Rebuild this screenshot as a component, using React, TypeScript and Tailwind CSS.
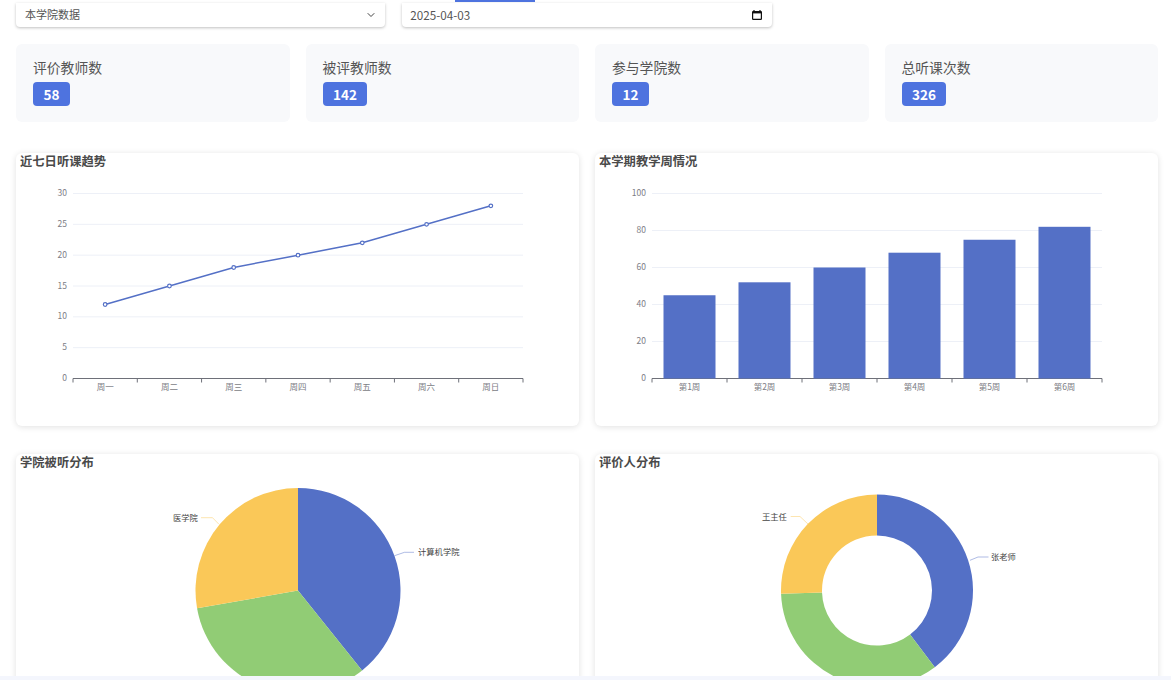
import { ReactNode } from "react";
import { ChevronDown } from "lucide-react";

const stats = [
  { label: "评价教师数", value: 58 },
  { label: "被评教师数", value: 142 },
  { label: "参与学院数", value: 12 },
  { label: "总听课次数", value: 326 },
];

const BLUE = "#5470c6";
const GREEN = "#91cc75";
const YELLOW = "#fac858";
const AXIS = "#6e7079";

// chart coordinates below are page pixels, each svg viewBox is offset to match
const TOP = 193.5;
const ZERO = 378.5;

function ChartCard({ title, x, y, children }: { title: string; x: number; y: number; children: ReactNode }) {
  return (
    <div className="h-[273px] overflow-hidden rounded-md bg-white shadow-[0_1px_6px_rgba(0,0,0,0.12)]">
      <h3 className="h-[18px] px-1 text-[12.3px] font-bold leading-[16px] text-[#4a4a4a]">{title}</h3>
      <svg viewBox={`${x} ${y} 563 255`} className="block h-[255px] w-full">
        {children}
      </svg>
    </div>
  );
}

function Axes({ left, right, max, step, labels }: { left: number; right: number; max: number; step: number; labels: string[] }) {
  const ticks: number[] = [];
  for (let v = 0; v <= max; v += step) ticks.push(v);
  const band = (right - left) / labels.length;
  return (
    <g fontSize="8.5" fill="#7c7d85">
      {ticks.map((v) => {
        const y = ZERO - (v / max) * (ZERO - TOP);
        return (
          <g key={v}>
            {v > 0 && <line x1={left} x2={right} y1={y} y2={y} stroke="#edf0f7" />}
            <text x={left - 6} y={y + 2.6} textAnchor="end">{v}</text>
          </g>
        );
      })}
      <line x1={left} x2={right} y1={ZERO} y2={ZERO} stroke={AXIS} />
      {labels.map((l, i) => (
        <g key={l}>
          <line x1={left + band * i} x2={left + band * i} y1={ZERO} y2={ZERO + 4} stroke={AXIS} />
          <text x={left + band * (i + 0.5)} y={ZERO + 11.5} textAnchor="middle">{l}</text>
        </g>
      ))}
      <line x1={right} x2={right} y1={ZERO} y2={ZERO + 4} stroke={AXIS} />
    </g>
  );
}

function LineChart() {
  const data = [12, 15, 18, 20, 22, 25, 28];
  const days = ["周一", "周二", "周三", "周四", "周五", "周六", "周日"];
  const band = 450 / 7;
  const pts = data.map((v, i) => [73 + band * (i + 0.5), ZERO - (v / 30) * (ZERO - TOP)]);
  return (
    <>
      <Axes left={73} right={523} max={30} step={5} labels={days} />
      <polyline points={pts.map((p) => p.join(",")).join(" ")} fill="none" stroke={BLUE} strokeWidth="1.5" />
      {pts.map((p, i) => (
        <circle key={i} cx={p[0]} cy={p[1]} r="1.8" fill="#fff" stroke={BLUE} strokeWidth="1.2" />
      ))}
    </>
  );
}

function BarChart() {
  const data = [45, 52, 60, 68, 75, 82];
  const weeks = ["第1周", "第2周", "第3周", "第4周", "第5周", "第6周"];
  return (
    <>
      <Axes left={652} right={1102} max={100} step={20} labels={weeks} />
      {data.map((v, i) => {
        const h = (v / 100) * (ZERO - TOP);
        return <rect key={i} x={652 + 75 * i + 11.5} y={ZERO - h} width="52" height={h} fill={BLUE} />;
      })}
    </>
  );
}

function polar(cx: number, cy: number, r: number, deg: number) {
  const a = (deg * Math.PI) / 180;
  return [cx + r * Math.sin(a), cy - r * Math.cos(a)];
}

function slice(cx: number, cy: number, r: number, inner: number, from: number, to: number) {
  const [x1, y1] = polar(cx, cy, r, from);
  const [x2, y2] = polar(cx, cy, r, to);
  const large = to - from > 180 ? 1 : 0;
  if (!inner) return `M${cx} ${cy}L${x1} ${y1}A${r} ${r} 0 ${large} 1 ${x2} ${y2}Z`;
  const [x3, y3] = polar(cx, cy, inner, to);
  const [x4, y4] = polar(cx, cy, inner, from);
  return `M${x1} ${y1}A${r} ${r} 0 ${large} 1 ${x2} ${y2}L${x3} ${y3}A${inner} ${inner} 0 ${large} 0 ${x4} ${y4}Z`;
}

function Pie({ cx, cy, r, inner, stops }: { cx: number; cy: number; r: number; inner: number; stops: number[] }) {
  return (
    <>
      <path d={slice(cx, cy, r, inner, 0, stops[0])} fill={BLUE} />
      <path d={slice(cx, cy, r, inner, stops[0], stops[1])} fill={GREEN} />
      <path d={slice(cx, cy, r, inner, stops[1], 360)} fill={YELLOW} />
    </>
  );
}

export default function App() {
  return (
    <div className="flex h-[680px] flex-col overflow-hidden bg-white font-['Noto_Sans_CJK_SC','Noto_Sans',sans-serif] text-[#333]">
      <div className="flex-1 overflow-hidden pl-4 pr-[13px]">
        {/* Filters */}
        <div className="relative grid h-[27px] grid-cols-3 gap-[17px] pt-[3px]">
          <div className="absolute left-[439px] top-0 h-[2px] w-[80px] bg-[#4e73df]" />
          <div className="flex items-center justify-between rounded-b-sm bg-white pb-[1px] pl-[9px] pr-[8px] shadow-[0_1px_3px_rgba(0,0,0,0.25)]">
            <span className="text-[11px] text-[#555]">本学院数据</span>
            <ChevronDown size={12} strokeWidth={2} className="text-[#444]" />
          </div>
          <div className="flex items-center justify-between rounded-b-sm bg-white pb-[1px] pl-2 pr-[10px] shadow-[0_1px_3px_rgba(0,0,0,0.25)]">
            <span className="text-[11.7px] text-[#555]">2025-04-03</span>
            <svg width="10" height="10" viewBox="0 0 10 10">
              <path d="M2 0v1M8 0v1" stroke="#111" strokeWidth="1.2" />
              <rect x="0.6" y="1.6" width="8.8" height="7.8" rx="0.6" fill="none" stroke="#111" strokeWidth="1.2" />
              <rect x="0.6" y="1.6" width="8.8" height="1.8" fill="#111" />
            </svg>
          </div>
          <div />
        </div>

        {/* Stats */}
        <div className="mt-[17px] grid grid-cols-4 gap-4">
          {stats.map((s) => (
            <div key={s.label} className="h-[78px] rounded-md bg-[#f8f9fb] pl-[17px] pt-[12px]">
              <div className="text-[13.8px] leading-[22px] text-[#555]">{s.label}</div>
              <span className="mt-[4px] inline-flex h-6 items-center rounded-sm bg-[#4e73df] px-[10.5px] text-[13.5px] font-bold text-white">
                {s.value}
              </span>
            </div>
          ))}
        </div>

        {/* Charts */}
        <div className="mt-[31px] grid grid-cols-2 gap-x-4 gap-y-7">
          <ChartCard title="近七日听课趋势" x={16} y={171}>
            <LineChart />
          </ChartCard>
          <ChartCard title="本学期教学周情况" x={595} y={171}>
            <BarChart />
          </ChartCard>
          <ChartCard title="学院被听分布" x={16} y={472}>
            <Pie cx={298} cy={590.5} r={102.5} inner={0} stops={[141.3, 260]} />
            <path d="M394.5 555.7L404.5 552.3H414" fill="none" stroke={BLUE} strokeOpacity="0.6" strokeWidth="0.8" />
            <path d="M201 517.7H212.5L218.7 524" fill="none" stroke={YELLOW} strokeOpacity="0.6" strokeWidth="0.8" />
            <text x="418" y="555" fontSize="8.3" fill="#444">计算机学院</text>
            <text x="173" y="520.5" fontSize="8.3" fill="#444">医学院</text>
          </ChartCard>
          <ChartCard title="评价人分布" x={595} y={472}>
            <Pie cx={877} cy={590.5} r={96} inner={55} stops={[143, 268]} />
            <path d="M970 560.3L978 557H988.5" fill="none" stroke={BLUE} strokeOpacity="0.6" strokeWidth="0.8" />
            <path d="M790.7 516.5H800L808 524" fill="none" stroke={YELLOW} strokeOpacity="0.6" strokeWidth="0.8" />
            <text x="991" y="559.5" fontSize="8.3" fill="#444">张老师</text>
            <text x="762" y="519.5" fontSize="8.3" fill="#444">王主任</text>
          </ChartCard>
        </div>
      </div>
      <div className="h-1 shrink-0 bg-[#f4f6fd]" />
    </div>
  );
}
